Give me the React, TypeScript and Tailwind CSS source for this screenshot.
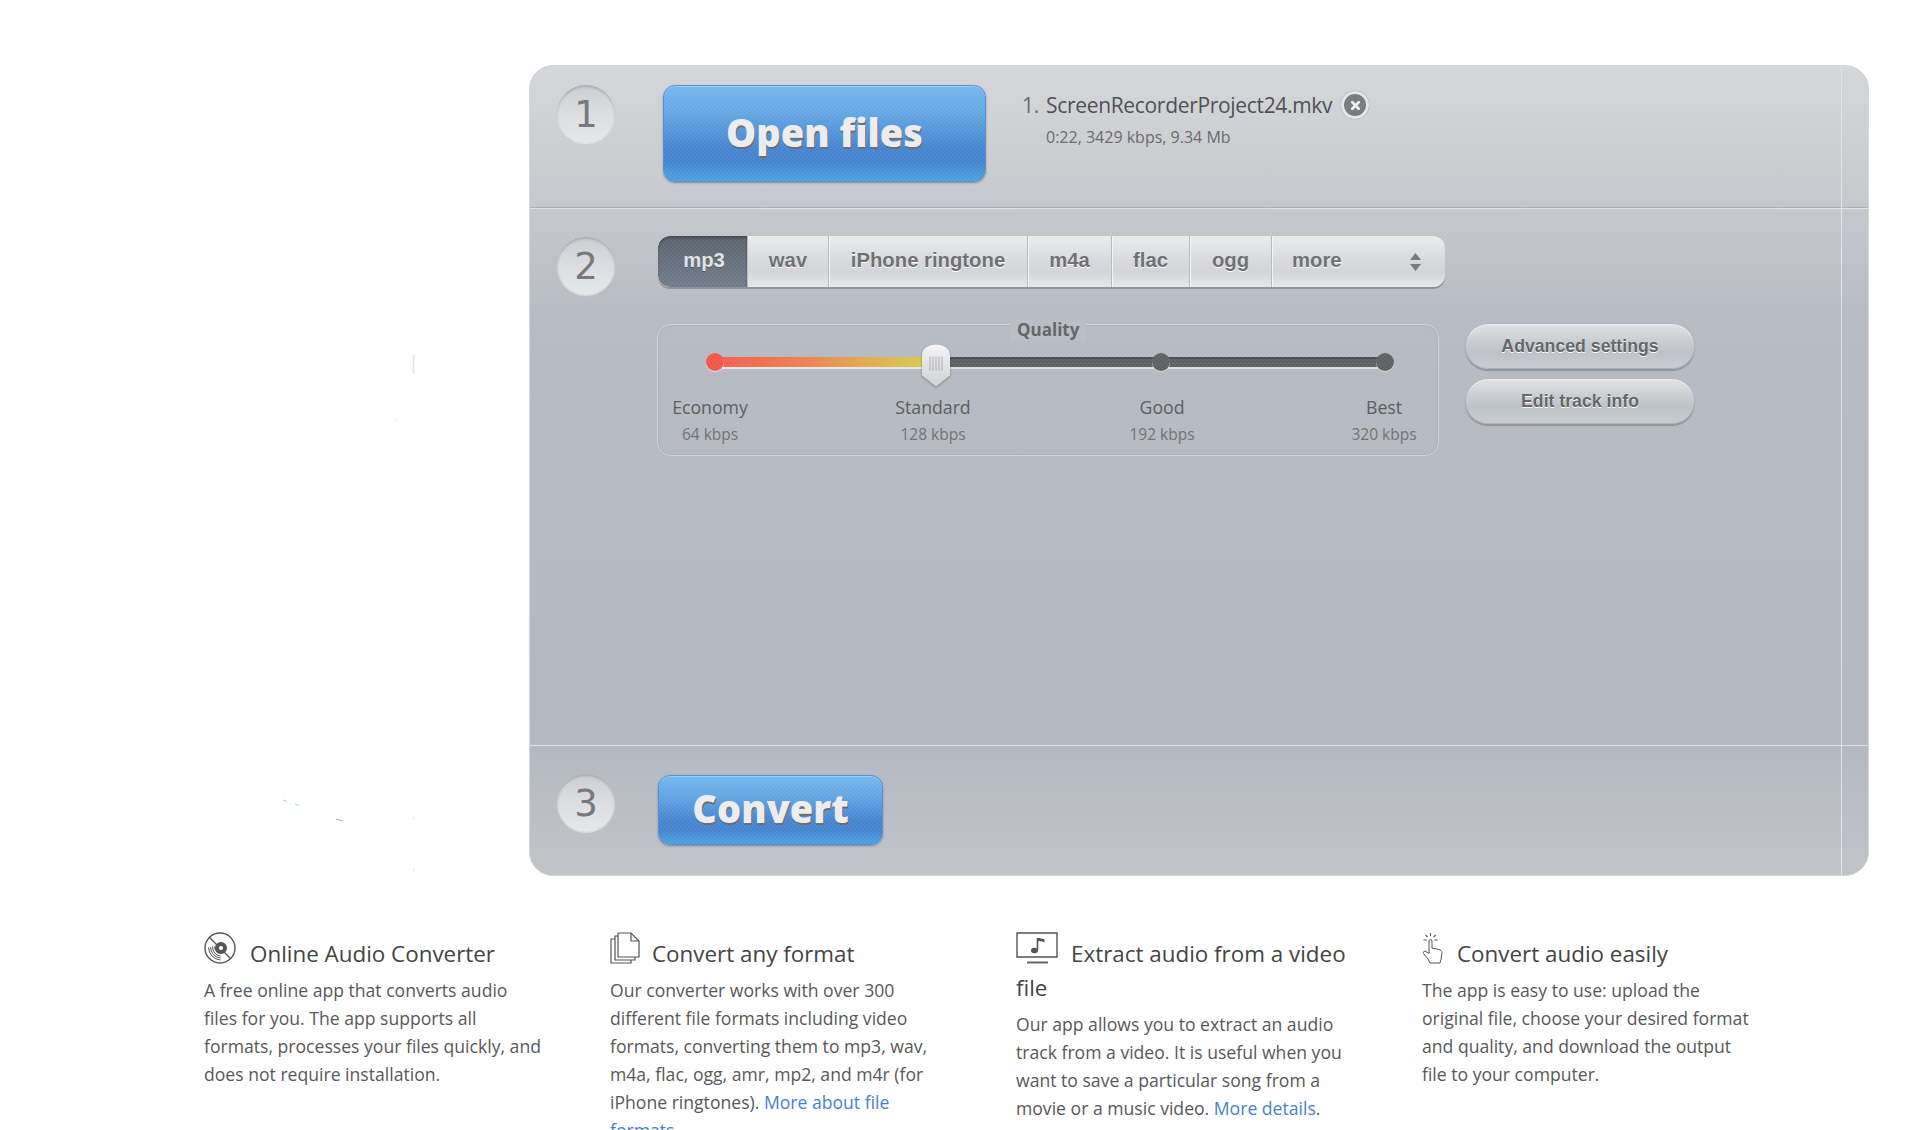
const blueBtn =
  "flex items-center justify-center rounded-[12px] border border-[#4f90d2] bg-[linear-gradient(180deg,#74b8ee_0%,#62a6e3_30%,#4685d0_65%,#4484cf_80%,#4ba3e0_100%)] pb-[3px] font-extrabold text-[#ececee] [text-shadow:1px_2px_0_#6b6b6b] shadow-[inset_0_1px_0_rgba(255,255,255,0.25),0_1px_2px_rgba(60,70,90,0.5)] [font-family:'Open_Sans',sans-serif]";

function Num({ n, className }: { n: string; className: string }) {
  return (
    <div className={"flex h-[58px] w-[58px] shrink-0 items-center justify-center rounded-full bg-[linear-gradient(180deg,#c9ccd1_0%,#dcdde1_50%,#e6e7ea_100%)] text-[37px] leading-none text-[#747679] shadow-[inset_0_2px_2px_rgba(110,115,125,0.35),0_1px_1px_rgba(255,255,255,0.5)] [font-family:'DejaVu_Sans',sans-serif] " + className}>
      {n}
    </div>
  );
}

function Tab({ label, w, active, last }: { label: string; w: string; active?: boolean; last?: boolean }) {
  return (
    <div className={"flex h-full items-center justify-center border-r pb-[3px] " + w + " " + (last ? "border-r-0 " : "border-r-[#b5b8bd] shadow-[1px_0_0_#f3f4f5] ") + (active ? "rounded-l-[12px] bg-[linear-gradient(180deg,#5b626d_0%,#65707d_50%,#727c8b_100%)] pl-[3px] text-[#dfe2e6] shadow-[inset_0_2px_2px_rgba(40,40,50,0.5),0_2px_0_#e4e6ea] [text-shadow:0_1px_0_#555]" : "text-[#6c6e72] [text-shadow:0_1px_0_#fff]")}>
      {label}
    </div>
  );
}

function Level({ a, b, className }: { a: string; b: string; className: string }) {
  return (
    <div className={"flex w-[100px] shrink-0 flex-col items-center whitespace-nowrap " + className}>
      <span className="text-[17.7px] leading-[27px] text-[#585a5d]">{a}</span>
      <span className="mt-[1px] text-[15.5px] leading-[24px] text-[#6e7073]">{b}</span>
    </div>
  );
}

function Dot({ className }: { className: string }) {
  return <span className={"absolute top-1/2 h-[18px] w-[18px] -translate-y-1/2 rounded-full " + className} />;
}

const pill =
  "flex h-[46px] items-center justify-center rounded-full border border-[#aeb2b9] bg-[linear-gradient(180deg,#e1e2e5_0%,#cbced3_35%,#bcc1c8_65%,#c8ccd2_100%)] text-[17.7px] font-bold text-[#616366] shadow-[0_2px_1px_#8e9297,inset_0_1px_0_#eceded] [text-shadow:0_1px_0_#fff] [font-family:'Liberation_Sans',sans-serif]";

function DiscIcon() {
  return (
    <svg viewBox="0 0 32 32" className="mr-[14px] inline-block h-[32px] w-[32px] align-[-2px]" fill="none" stroke="#555" strokeWidth="1">
      <circle cx="16" cy="16" r="15" strokeWidth="1.4" />
      <path d="M8.500 14.500a9 9 0 0 0 8 9.500M6.500 15a11 11 0 0 0 10 11M4.500 15.500a13 13 0 0 0 12 12.500M10.500 14.500a7 7 0 0 0 6 7" />
      <path d="M5 5 27 27" strokeWidth="1.3" />
      <circle cx="17" cy="16" r="6" fill="#555" stroke="none" />
      <circle cx="17" cy="16" r="2" fill="#fff" stroke="none" />
    </svg>
  );
}
function DocsIcon() {
  return (
    <svg viewBox="0 0 30 32" className="mr-[12px] inline-block h-[32px] w-[30px] align-[-2px]" fill="none" stroke="#555" strokeWidth="1.2">
      <path d="M8 1h13l8 8v16H8z" fill="#fff" />
      <path d="M21 1v8h8" />
      <path d="M8 4H5v24h20v-3" />
      <path d="M5 7H1v24h20v-3" />
    </svg>
  );
}
function TvIcon() {
  return (
    <svg viewBox="0 0 42 32" className="mr-[13px] inline-block h-[32px] w-[42px] align-[-2px]" fill="none" stroke="#555">
      <path d="M1 1h40v24H1z" strokeWidth="1.4" />
      <path d="M11 30.500h21" strokeWidth="2" stroke="#666" />
      <path d="M21.500 6v12" strokeWidth="1.6" />
      <path d="M21.500 6c2 0 5 .5 7 1.500v3c-2-1-4-1.500-7-1.500z" fill="#555" stroke="none" />
      <ellipse cx="18.500" cy="18.500" rx="3.500" ry="2.800" fill="#555" stroke="none" />
    </svg>
  );
}
function HandIcon() {
  return (
    <svg viewBox="0 0 22 32" className="mr-[13px] inline-block h-[32px] w-[22px] align-[-2px]" fill="none" stroke="#555" strokeWidth="1">
      <path d="M7 13V9a1.500 1.500 0 0 1 3 0v7l7 1.500c1.500.5 3 1.500 3 3l-1 7-1 3.500H8l-2-4-4.500-5.500c-1-1.500 1-3 2.500-2l3 2z" />
      <path d="M8.500 1v3M3.500 3l2 2M13.500 3l-2 2M1.500 8h3M12.500 8h3" strokeWidth="1.1" />
    </svg>
  );
}

const link = "text-[#4a7fc9]";

function Info({ icon, title, w, children }: { icon: React.ReactNode; title: string; w: string; children: React.ReactNode }) {
  return (
    <div className={w}>
      <h3 className="mb-[5px] whitespace-normal text-[22.4px] font-medium leading-[34px] text-[#444]">
        {icon}
        {title}
      </h3>
      <p className="text-[17.6px] leading-[28px] text-[#585858]">{children}</p>
    </div>
  );
}

export default function App() {
  return (
    <div className="relative h-[1130px] w-[1920px] overflow-hidden bg-white [font-family:'Open_Sans','Noto_Sans',sans-serif]">
      <svg className="pointer-events-none absolute left-[280px] top-[350px] h-[530px] w-[140px]" viewBox="0 0 140 530" fill="none">
        <path d="M133.500 5v19" stroke="#e2e2e2" strokeWidth="1.500" />
        <path d="M116 69v2M133.500 467v2M133.500 518v3" stroke="#e6e6e6" />
        <path d="M3 450l4 1.500M15 454l4 1.500" stroke="#a9d0f2" strokeWidth="1.200" />
        <path d="M56 469l7 2" stroke="#8fc2ee" strokeWidth="1.200" />
      </svg>
      <div className="ml-[529px] mt-[65px] w-[1340px]">
        <div className="relative h-[811px] overflow-hidden rounded-[24px] border border-[#d6d7da] bg-[#bcc0c7]">
          <section className="flex h-[143px] border-b border-b-[#e2e3e6] bg-[linear-gradient(180deg,#d5d6d9_0%,#c5c7cc_100%)] pl-[27px] pt-[19px] shadow-[0_-1px_0_#aeb1b6_inset]">
            <Num n="1" className="" />
            <div className="ml-[48px] h-[97px] w-[323px] shrink-0">
              <div className={blueBtn + " h-full w-full text-[38px]"}>Open files</div>
            </div>
            <div className="ml-[36px] mt-[2px]">
              <div className="flex items-center text-[21px] leading-[36px] tracking-[-0.32px] text-[#4b4d50]">
                <span className="w-[24px] text-[#66686b]">1.</span>
                <span>ScreenRecorderProject24.mkv</span>
                <span className="ml-[9px] flex h-[28px] w-[28px] items-center justify-center rounded-full border-[3px] border-[#e4e5e8] bg-[#77797c] shadow-[0_0_1px_#777]">
                  <svg viewBox="0 0 12 12" className="h-[11px] w-[11px]" stroke="#f0f0f0" strokeWidth="3" strokeLinecap="round">
                    <path d="M2.500 2.500l7 7M9.500 2.500l-7 7" />
                  </svg>
                </span>
              </div>
              <div className="ml-[24px] mt-[2px] text-[16px] leading-[24px] text-[#66686b]">0:22, 3429 kbps, 9.34 Mb</div>
            </div>
          </section>

          <section className="flex h-[537px] border-b border-b-[#dcdee1] bg-[linear-gradient(180deg,#c4c7cc_0%,#b6bac2_20%,#b3b8c0_100%)] pl-[27px] pt-[27px]">
            <Num n="2" className="mt-[1px]" />
            <div className="ml-[43px]">
              <div className="flex h-[51px] w-[787px] overflow-hidden rounded-[12px] bg-[linear-gradient(180deg,#ebecee_0%,#d6d8dc_50%,#d2d4d8_70%,#e6e7e9_100%)] text-[20.3px] font-bold shadow-[0_2px_0_#8e9196] [font-family:'Liberation_Sans',sans-serif]">
                <Tab label="mp3" w="w-[90px]" active />
                <Tab label="wav" w="w-[81px]" />
                <Tab label="iPhone ringtone" w="w-[199px]" />
                <Tab label="m4a" w="w-[84px]" />
                <Tab label="flac" w="w-[78px]" />
                <Tab label="ogg" w="w-[82px]" />
                <div className="flex flex-1 items-center justify-between pb-[3px] pl-[20px] pr-[23px] text-[#6c6e72] [text-shadow:0_1px_0_#fff]">
                  <span>more</span>
                  <svg viewBox="0 0 12 20" className="mt-[3px] h-[20px] w-[13px]" fill="#76787c">
                    <path d="M6 1l5.500 7H.500zM6 19l5.500-7H.500z" />
                  </svg>
                </div>
              </div>

              <div className="ml-[-1px] mt-[37px] flex items-start">
                <div className="relative h-[132px] w-[782px] shrink-0 rounded-[14px] border border-[#cfd2d7] shadow-[inset_0_0_2px_rgba(130,135,145,0.5)]">
                  <span className="absolute left-[352px] top-[-6px] bg-[#b9bdc5] px-[7px] text-[17px] font-bold leading-[22px] text-[#626466]">Quality</span>
                  <div className="relative ml-[57px] mt-[32px] h-[10px] w-[670px] rounded-full bg-[#5f6062] shadow-[0_2px_0_#dcdee1,inset_0_2px_1px_#4c4d4f]">
                    <div className="h-full w-[222px] rounded-l-full bg-[linear-gradient(90deg,#f25c4e_0%,#ee8050_40%,#e4a650_65%,#d5d04c_100%)] shadow-[0_2px_0_#e4e6e9]" />
                    <Dot className="left-[-9px] bg-[#f2574a] shadow-[0_1px_0_#e4e6e9]" />
                    <Dot className="left-[437px] bg-[#5f6062] shadow-[0_1px_0_#d8dade]" />
                    <Dot className="left-[661px] bg-[#5f6062] shadow-[0_1px_0_#d8dade]" />
                    <svg viewBox="0 0 30 44" className="absolute left-[206px] top-[-14px] h-[45px] w-[30px] drop-shadow-[0_1px_1px_rgba(60,60,70,0.5)]">
                      <defs>
                        <linearGradient id="hg" x1="0" y1="0" x2="0" y2="1">
                          <stop offset="0" stopColor="#f4f4f5" />
                          <stop offset="1" stopColor="#cfd0d4" />
                        </linearGradient>
                      </defs>
                      <path d="M1 12C1 5 7 1 15 1s14 4 14 11v20L15 43 1 32z" fill="url(#hg)" />
                      <path d="M9 13v14M12 13v14M15 13v14M18 13v14M21 13v14" stroke="#a9abb0" strokeWidth="1" />
                    </svg>
                  </div>
                  <div className="mt-[27px] flex">
                    <Level a="Economy" b="64 kbps" className="ml-[2px]" />
                    <Level a="Standard" b="128 kbps" className="ml-[123px]" />
                    <Level a="Good" b="192 kbps" className="ml-[129px]" />
                    <Level a="Best" b="320 kbps" className="ml-[122px]" />
                  </div>
                </div>
                <div className="ml-[26px] mt-[-1px] flex w-[230px] flex-col gap-[9px]">
                  <div className={pill}>Advanced settings</div>
                  <div className={pill}>Edit track info</div>
                </div>
              </div>
            </div>
          </section>

          <section className="flex h-[129px] bg-[linear-gradient(180deg,#b3b8c0_0%,#c0c2c7_100%)] pl-[27px] pt-[28px]">
            <Num n="3" className="" />
            <div className="ml-[43px] mt-[1px] h-[70px] w-[225px] shrink-0">
              <div className={blueBtn + " h-full w-full text-[38px]"}>Convert</div>
            </div>
          </section>

          <div className="pointer-events-none absolute inset-0 bg-[repeating-conic-gradient(rgba(255,255,255,0.045)_0_25%,transparent_0_50%)] bg-[length:4px_4px]" />
          <div className="pointer-events-none absolute bottom-0 right-[26px] top-0 w-px bg-[#e2e3e6]" />
        </div>
      </div>

      <div className="ml-[204px] mt-[56px] grid w-[1624px] grid-cols-4">
        <Info w="w-[340px]" icon={<DiscIcon />} title="Online Audio Converter">
          A free online app that converts audio files for you. The app supports all formats, processes your files quickly, and does not require installation.
        </Info>
        <Info w="w-[340px]" icon={<DocsIcon />} title="Convert any format">
          Our converter works with over 300 different file formats including video formats, converting them to mp3, wav, m4a, flac, ogg, amr, mp2, and m4r (for iPhone ringtones). <a className={link}>More about file formats</a>.
        </Info>
        <Info w="w-[340px]" icon={<TvIcon />} title="Extract audio from a video file">
          Our app allows you to extract an audio track from a video. It is useful when you want to save a particular song from a movie or a music video. <a className={link}>More details</a>.
        </Info>
        <Info w="w-[332px]" icon={<HandIcon />} title="Convert audio easily">
          The app is easy to use: upload the original file, choose your desired format and quality, and download the output file to your computer.
        </Info>
      </div>
    </div>
  );
}
